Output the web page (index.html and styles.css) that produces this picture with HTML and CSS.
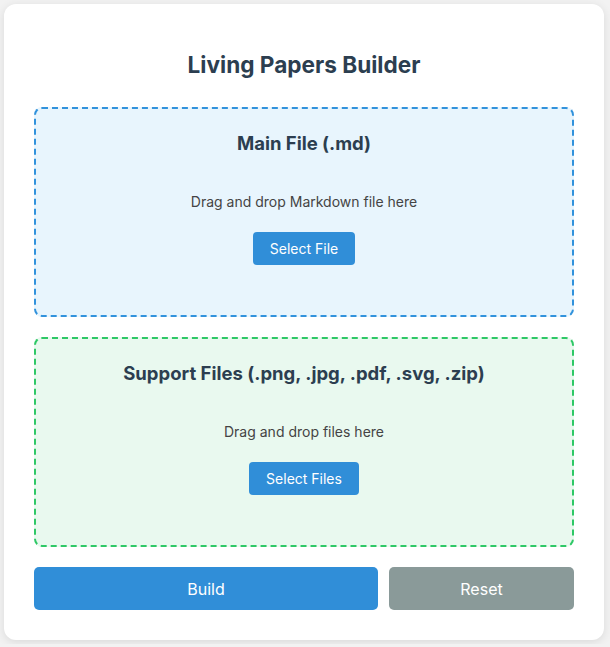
FILE: index.html
```html
<!DOCTYPE html>
<html lang="en">
<head>
<meta charset="utf-8">
<title>Living Papers Builder</title>
<link rel="stylesheet" href="styles.css">
</head>
<body>
<div class="card">
  <h1 class="title">Living Papers Builder</h1>
  <div class="drop drop-main">
    <h3 class="drop-title">Main File (.md)</h3>
    <p class="drop-text">Drag and drop Markdown file here</p>
    <button class="select-btn">Select File</button>
  </div>
  <div class="drop drop-support">
    <h3 class="drop-title">Support Files (.png, .jpg, .pdf, .svg, .zip)</h3>
    <p class="drop-text">Drag and drop files here</p>
    <button class="select-btn">Select Files</button>
  </div>
  <div class="actions">
    <button class="action build">Build</button>
    <button class="action reset">Reset</button>
  </div>
</div>
</body>
</html>
```
FILE: styles.css
```css
html, body {
  margin: 0;
  padding: 0;
  background: #f2f2f2;
}
body {
  padding: 4px;
  font-family: Inter, "Noto Sans", "Liberation Sans", sans-serif;
}
.card {
  width: 600px;
  box-sizing: border-box;
  background: #ffffff;
  border-radius: 12px;
  box-shadow: 0 2px 10px rgba(0, 0, 0, 0.1);
  padding: 47px 30px 30px;
  display: flex;
  flex-direction: column;
}
.title {
  margin: 0 0 28px;
  font-size: 22.6px;
  line-height: 28px;
  font-weight: 700;
  color: #2c3e50;
  text-align: center;
}
.drop {
  box-sizing: border-box;
  height: 210px;
  border: 2px dashed #3192dc;
  border-radius: 8px;
  padding: 23px 20px 0;
  display: flex;
  flex-direction: column;
  align-items: center;
  margin-bottom: 20px;
}
.drop-main {
  background: #e8f5fd;
}
.drop-support {
  background: #e9f9ef;
  border-color: #2ec866;
}
.drop-title {
  margin: 0 0 38px;
  font-size: 18.5px;
  line-height: 22px;
  font-weight: 700;
  color: #2c3e50;
}
.drop-text {
  margin: 0 0 20px;
  font-size: 14px;
  line-height: 20px;
  color: #444444;
}
.select-btn {
  height: 33px;
  padding: 0 17px;
  border: none;
  border-radius: 4px;
  background: #308ed8;
  color: #ffffff;
  font-family: inherit;
  font-size: 14px;
}
.actions {
  display: flex;
  gap: 11px;
}
.action {
  height: 43px;
  border: none;
  border-radius: 5px;
  color: #ffffff;
  font-family: inherit;
  font-size: 16px;
}
.build {
  flex: 1;
  background: #308ed8;
}
.reset {
  width: 185px;
  background: #8a9a99;
}
```
